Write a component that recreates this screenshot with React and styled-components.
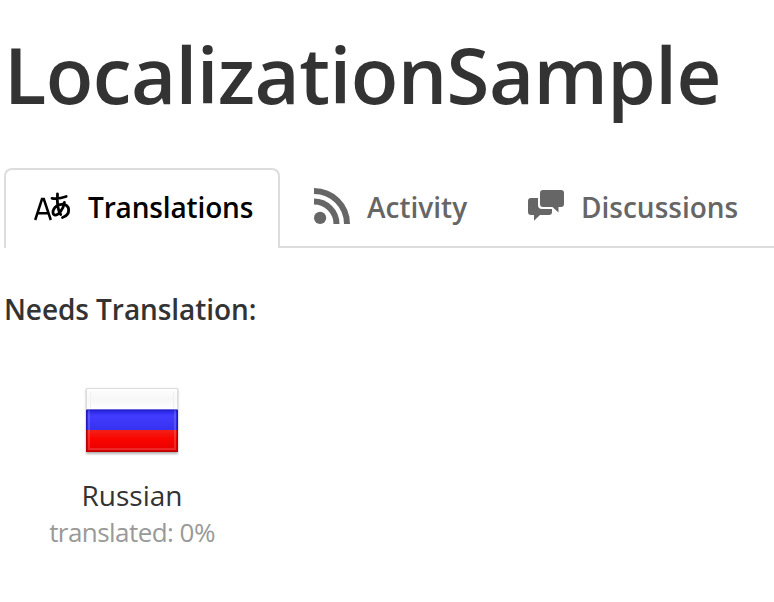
import React from "react";
import styled, { createGlobalStyle } from "styled-components";

const GlobalStyle = createGlobalStyle`
  * { box-sizing: border-box; }
  body {
    margin: 0;
    background: #fff;
    color: #333;
    font-family: "Open Sans", sans-serif;
    overflow: hidden;
  }
`;

const Page = styled.main`
  width: 774px;
  height: 602px;
  overflow: hidden;
`;

const Title = styled.h1`
  margin: 0;
  padding: 20px 0 0 4px;
  height: 168px;
  font-size: 78px;
  font-weight: 600;
  line-height: 108px;
  letter-spacing: -0.6px;
  white-space: nowrap;
`;

const TabBar = styled.nav`
  display: flex;
  height: 80px;
  padding-left: 4px;
`;

const Tab = styled.a`
  display: flex;
  align-items: center;
  flex: none;
  height: 80px;
  width: ${(p) => p.$width}px;
  padding: 0 0 ${(p) => (p.$active ? 4 : 2)}px ${(p) => p.$inset}px;
  gap: ${(p) => p.$gap}px;
  color: ${(p) => (p.$active ? "#000" : "#666")};
  font-size: 28px;
  font-weight: 600;
  line-height: 76px;
  white-space: nowrap;
  ${(p) =>
    p.$active
      ? "border: 2px solid #ddd; border-bottom: 0; border-radius: 8px 8px 0 0;"
      : "border-bottom: 2px solid #ddd;"}
`;

const TabLabel = styled.span`
  padding-top: ${(p) => p.$drop || 0}px;
  letter-spacing: ${(p) => p.$spacing || 0}px;
`;

const Icon = styled.svg`
  flex: none;
  display: block;
  overflow: visible;
`;

const Heading = styled.h2`
  margin: 0;
  padding: 41px 0 0 4px;
  font-size: 28px;
  font-weight: 600;
  line-height: 40px;
  letter-spacing: -0.07px;
`;

const LanguageCard = styled.section`
  display: flex;
  flex-direction: column;
  align-items: center;
  width: 264px;
  padding-top: 57px;
`;

const LanguageName = styled.div`
  margin-top: 19px;
  font-size: 28px;
  line-height: 40px;
`;

const Progress = styled.div`
  font-size: 26px;
  line-height: 34px;
  letter-spacing: -0.55px;
  color: #999;
`;

function TranslateIcon() {
  return (
    <Icon width="36" height="36" viewBox="0 0 36 36" fill="none" stroke="currentColor">
      <path d="M1.2 31L8 10H9.8L16.8 31M4 24.2H14" strokeWidth="2.5" />
      <path
        d="M18 9.3C23 10 29 8.7 32.2 7.5M23.5 4.8C23 12 23 20 26.7 25.5M30.4 13.5C29.5 20 24 27 20.5 26C17 24.5 19.5 16 27.5 15.3C36.5 14.5 37.2 25.5 28.5 28.5"
        strokeWidth="2.8"
        strokeLinecap="round"
      />
    </Icon>
  );
}

function FeedIcon() {
  return (
    <Icon width="36" height="36" viewBox="0 0 36 36">
      <circle cx="6.1" cy="29.9" r="6.1" fill="currentColor" />
      <path
        d="M0 13.5A22.5 22.5 0 0 1 22.5 36M0 3A33 33 0 0 1 33 36"
        fill="none"
        stroke="currentColor"
        strokeWidth="6"
      />
    </Icon>
  );
}

function DiscussionIcon() {
  return (
    <Icon width="36" height="36" viewBox="0 0 36 36" fill="currentColor">
      <path d="M15 2H33Q36 2 36 5V16Q36 19 33 19H30.5V24.5L24.5 19H15Q12 19 12 16V5Q12 2 15 2Z" />
      <path d="M3 10H10V17Q10 21 14 21H24V24Q24 27 21 27H12L6 32.8V27H3Q0 27 0 24V13Q0 10 3 10Z" />
    </Icon>
  );
}

function RussianFlag() {
  return (
    <Icon width="96" height="70" viewBox="0 0 96 70">
      <defs>
        <linearGradient id="white" x2="0" y2="1">
          <stop stopColor="#fff" />
          <stop offset="0.5" stopColor="#f7f7f7" />
          <stop offset="1" stopColor="#fff" />
        </linearGradient>
        <linearGradient id="blue" x2="0" y2="1">
          <stop stopColor="#2320d8" />
          <stop offset="0.3" stopColor="#423cff" />
          <stop offset="1" stopColor="#3630ef" />
        </linearGradient>
        <linearGradient id="red" x2="0" y2="1">
          <stop stopColor="#f02018" />
          <stop offset="0.4" stopColor="#fb0500" />
          <stop offset="1" stopColor="#e40000" />
        </linearGradient>
        <filter id="shadow" x="-10%" y="-10%" width="120%" height="130%">
          <feGaussianBlur stdDeviation="1" />
        </filter>
      </defs>
      <rect x="2" y="3" width="92" height="65" fill="#000" opacity="0.3" filter="url(#shadow)" />
      <rect x="2" y="2" width="92" height="22" fill="url(#white)" />
      <rect x="2" y="23.5" width="92" height="21" fill="url(#blue)" />
      <rect x="2" y="44" width="92" height="22" fill="url(#red)" />
      <path d="M2.5 24V2.5H93.5V24" fill="none" stroke="#ddd" />
      <path d="M2.7 24V44M93.3 24V44" stroke="#2018b8" strokeWidth="1.4" />
      <path d="M2.7 44V65.4H93.3V44" fill="none" stroke="#b80000" strokeWidth="1.4" />
      <rect x="5" y="5" width="86" height="58" fill="none" stroke="#fff" strokeOpacity="0.15" strokeWidth="2" />
      <path d="M6.5 6V22M89.5 6V22" stroke="#f0f0f0" />
      <path d="M2 24H94" stroke="#1b17bd" strokeOpacity="0.65" />
    </Icon>
  );
}

export default function App() {
  return (
    <>
      <GlobalStyle />
      <Page>
        <Title>LocalizationSample</Title>
        <TabBar>
          <Tab $active $width={276} $inset={28} $gap={18}>
            <TranslateIcon />
            <TabLabel $spacing={-0.15}>Translations</TabLabel>
          </Tab>
          <Tab $width={212} $inset={34} $gap={17}>
            <FeedIcon />
            <TabLabel $drop={2}>Activity</TabLabel>
          </Tab>
          <Tab $width={282} $inset={36} $gap={17}>
            <DiscussionIcon />
            <TabLabel $drop={2}>Discussions</TabLabel>
          </Tab>
        </TabBar>
        <Heading>Needs Translation:</Heading>
        <LanguageCard>
          <RussianFlag />
          <LanguageName>Russian</LanguageName>
          <Progress>translated: 0%</Progress>
        </LanguageCard>
      </Page>
    </>
  );
}
